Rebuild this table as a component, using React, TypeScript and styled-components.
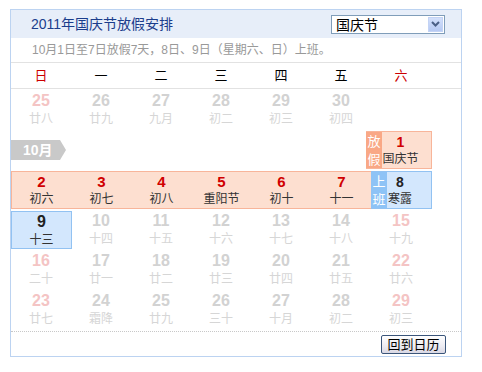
import React from "react";
import styled, { createGlobalStyle, css } from "styled-components";

const Global = createGlobalStyle`
  html, body { margin: 0; padding: 0; background: #fff; }
  body { font-family: "Liberation Sans", "Noto Sans CJK SC", sans-serif; }
`;

const FONT = `"Liberation Sans", "Noto Sans CJK SC", sans-serif`;

const Panel = styled.div`
  margin: 9px 0 0 10px;
  width: 452px;
  box-sizing: border-box;
  border: 1px solid #bcd3f1;
  font-family: ${FONT};
`;

const Header = styled.div`
  height: 28px;
  background: #e7eef9;
  display: flex;
  align-items: center;
  justify-content: space-between;
  padding: 0 16px 0 20px;
`;

const Title = styled.div`
  font-size: 14px;
  line-height: 28px;
  color: #1b3d8c;
`;

const Select = styled.div`
  width: 114px;
  height: 19px;
  box-sizing: border-box;
  border: 1px solid #7f9db9;
  background: #fff;
  display: flex;
  align-items: center;
  justify-content: space-between;
  padding: 0 1px 0 4px;
  font-size: 14px;
  color: #000;
`;

const SelectArrow = styled.div`
  width: 15px;
  height: 15px;
  background: linear-gradient(#d3e0fb, #b6c9f3);
  border: 1px solid #c3d3f5;
  box-sizing: border-box;
  display: flex;
  align-items: center;
  justify-content: center;
`;

const Notice = styled.div`
  height: 24px;
  border-bottom: 1px solid #e2e2e2;
  padding-left: 21px;
  font-size: 12px;
  line-height: 24px;
  color: #999;
  white-space: nowrap;
`;

const WeekRow = styled.div`
  display: grid;
  grid-template-columns: repeat(7, 60px);
  height: 25px;
  border-bottom: 1px solid #e2e2e2;
`;

const WeekLabel = styled.div<{ $red?: boolean }>`
  text-align: center;
  font-size: 13px;
  line-height: 26px;
  color: ${(p) => (p.$red ? "#cc0000" : "#000")};
`;

const Grid = styled.div`
  display: grid;
  grid-template-columns: repeat(7, 60px);
  grid-auto-rows: 38px;
  row-gap: 2px;
  padding: 2px 0;
`;

type Tone = "faded" | "fadedWeekend" | "selected";

const Cell = styled.div<{ $tone: Tone }>`
  box-sizing: border-box;
  text-align: center;
  ${(p) =>
    p.$tone === "selected" &&
    css`
      width: 61px;
      background: #d3e7fd;
      border: 1px solid #92c2f2;
    `}
`;

const Num = styled.div<{ $tone: Tone }>`
  font-weight: bold;
  font-size: 16px;
  line-height: 19px;
  color: ${(p) =>
    p.$tone === "fadedWeekend" ? "#f4c4c4" : p.$tone === "selected" ? "#222" : "#d2d2d2"};
`;

const Lunar = styled.div<{ $tone: Tone }>`
  font-size: 12px;
  line-height: 18px;
  color: ${(p) => (p.$tone === "selected" ? "#333" : "#d6d6d6")};
`;

const MonthTag = styled.div`
  align-self: center;
  width: 55px;
  height: 20px;
  background: #c9c9c9;
  clip-path: polygon(0 0, 49px 0, 55px 50%, 49px 100%, 0 100%);
  color: #fff;
  font-weight: bold;
  font-size: 14px;
  line-height: 20px;
  padding-left: 12px;
  box-sizing: border-box;
`;

const Band = styled.div`
  grid-column: 1 / span 6;
  display: grid;
  grid-template-columns: repeat(6, 60px);
  box-sizing: border-box;
  background: #fddfd0;
  border: 1px solid #f8b59a;
  border-right: none;
`;

const BandDay = styled.div`
  text-align: center;
  margin-left: -1px;
`;

const RedNum = styled.div<{ $size?: number }>`
  font-weight: bold;
  font-size: ${(p) => p.$size ?? 15}px;
  line-height: 18px;
  padding-top: 1px;
  color: #d00000;
`;

const DarkLunar = styled.div`
  font-size: 12px;
  line-height: 16px;
  color: #333;
`;

const MarkCell = styled.div<{ $kind: "off" | "work" }>`
  grid-column: 7;
  display: flex;
  box-sizing: border-box;
  ${(p) =>
    p.$kind === "off"
      ? css`
          margin-left: -5px;
          width: 66px;
          background: #fddfd0;
          border: 1px solid #f8b59a;
          border-left: none;
        `
      : css`
          width: 61px;
          background: #d3e7fd;
          border: 1px solid #92c2f2;
          border-left: none;
        `}
`;

const MarkLabel = styled.div<{ $kind: "off" | "work" }>`
  width: 16px;
  flex: none;
  background: ${(p) => (p.$kind === "off" ? "#f9a886" : "#8ec3f6")};
  color: #fff;
  font-size: 13px;
  line-height: 18px;
  text-align: center;
  padding-top: 1px;
`;

const MarkBody = styled.div<{ $pad: number }>`
  flex: 1;
  text-align: center;
  padding-right: ${(p) => p.$pad}px;
`;

const DarkNum = styled.div`
  font-weight: bold;
  font-size: 14px;
  line-height: 18px;
  padding-top: 1px;
  color: #222;
`;

const Footer = styled.div`
  height: 24px;
  border-top: 1px dotted #c8c8c8;
  display: flex;
  align-items: center;
  justify-content: flex-end;
  padding-right: 15px;
`;

const BackButton = styled.button`
  width: 65px;
  height: 19px;
  padding: 0;
  border: 1px solid #3a557a;
  border-radius: 2px;
  background: linear-gradient(#ffffff, #ecebf2 60%, #d9d8e4);
  font-family: ${FONT};
  font-size: 13px;
  line-height: 17px;
  color: #000;
`;

type Day = { n: number; l: string; w?: boolean; sel?: boolean };

const row1: Day[] = [
  { n: 25, l: "廿八", w: true },
  { n: 26, l: "廿九" },
  { n: 27, l: "九月" },
  { n: 28, l: "初二" },
  { n: 29, l: "初三" },
  { n: 30, l: "初四" },
];

const holiday = [
  { n: 2, l: "初六" },
  { n: 3, l: "初七" },
  { n: 4, l: "初八" },
  { n: 5, l: "重阳节" },
  { n: 6, l: "初十" },
  { n: 7, l: "十一" },
];

const restRows: Day[][] = [
  [
    { n: 9, l: "十三", sel: true },
    { n: 10, l: "十四" },
    { n: 11, l: "十五" },
    { n: 12, l: "十六" },
    { n: 13, l: "十七" },
    { n: 14, l: "十八" },
    { n: 15, l: "十九", w: true },
  ],
  [
    { n: 16, l: "二十", w: true },
    { n: 17, l: "廿一" },
    { n: 18, l: "廿二" },
    { n: 19, l: "廿三" },
    { n: 20, l: "廿四" },
    { n: 21, l: "廿五" },
    { n: 22, l: "廿六", w: true },
  ],
  [
    { n: 23, l: "廿七", w: true },
    { n: 24, l: "霜降" },
    { n: 25, l: "廿九" },
    { n: 26, l: "三十" },
    { n: 27, l: "十月" },
    { n: 28, l: "初二" },
    { n: 29, l: "初三", w: true },
  ],
];

const weekdays = ["日", "一", "二", "三", "四", "五", "六"];

function DayBox({ d }: { d: Day }) {
  const tone: Tone = d.sel ? "selected" : d.w ? "fadedWeekend" : "faded";
  return (
    <Cell $tone={tone}>
      <Num $tone={tone}>{d.n}</Num>
      <Lunar $tone={tone}>{d.l}</Lunar>
    </Cell>
  );
}

export default function App() {
  return (
    <>
      <Global />
      <Panel>
        <Header>
          <Title>2011年国庆节放假安排</Title>
          <Select>
            <span>国庆节</span>
            <SelectArrow>
              <svg width="9" height="6" viewBox="0 0 9 6">
                <path d="M1 1 L4.5 4.5 L8 1" fill="none" stroke="#4a5f86" strokeWidth="2" />
              </svg>
            </SelectArrow>
          </Select>
        </Header>
        <Notice>10月1日至7日放假7天，8日、9日（星期六、日）上班。</Notice>
        <WeekRow>
          {weekdays.map((w, i) => (
            <WeekLabel key={w} $red={i === 0 || i === 6}>
              {w}
            </WeekLabel>
          ))}
        </WeekRow>
        <Grid>
          {row1.map((d) => (
            <DayBox key={"a" + d.n} d={d} />
          ))}
          <div />
          <MonthTag>10月</MonthTag>
          <MarkCell $kind="off">
            <MarkLabel $kind="off">放假</MarkLabel>
            <MarkBody $pad={12}>
              <RedNum $size={14}>1</RedNum>
              <DarkLunar>国庆节</DarkLunar>
            </MarkBody>
          </MarkCell>
          <Band>
            {holiday.map((d) => (
              <BandDay key={d.n}>
                <RedNum>{d.n}</RedNum>
                <DarkLunar>{d.l}</DarkLunar>
              </BandDay>
            ))}
          </Band>
          <MarkCell $kind="work">
            <MarkLabel $kind="work">上班</MarkLabel>
            <MarkBody $pad={18}>
              <DarkNum>8</DarkNum>
              <DarkLunar>寒露</DarkLunar>
            </MarkBody>
          </MarkCell>
          {restRows.map((r) => r.map((d) => <DayBox key={"r" + d.n} d={d} />))}
        </Grid>
        <Footer>
          <BackButton>回到日历</BackButton>
        </Footer>
      </Panel>
    </>
  );
}
